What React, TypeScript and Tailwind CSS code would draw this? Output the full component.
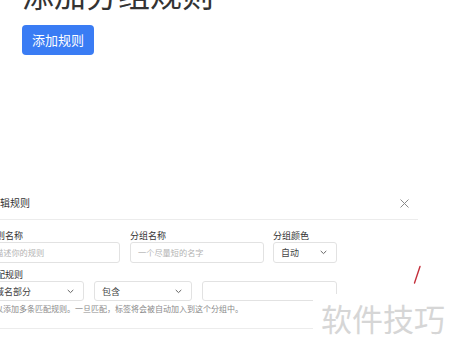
const font = { fontFamily: '"Noto Sans CJK SC", "Noto Sans", sans-serif' };

function Chevron() {
  return (
    <svg width="7" height="5" viewBox="0 0 7 5" fill="none" className="shrink-0">
      <path d="M1 1.2L3.5 3.6L6 1.2" stroke="#666" strokeWidth="1" strokeLinecap="round" strokeLinejoin="round" />
    </svg>
  );
}

function Field({ placeholder, className }: { placeholder?: string; className: string }) {
  return (
    <div className={`flex items-center rounded-[3px] border border-[#e2e2e2] bg-white px-[7px] ${className}`}>
      <span className="text-[8.2px] leading-none whitespace-nowrap text-[#b3b3b3]">{placeholder}</span>
    </div>
  );
}

function Select({ value, className }: { value: string; className: string }) {
  return (
    <div className={`flex items-center justify-between rounded-[3px] border border-[#e2e2e2] bg-white pl-[7px] pr-[9px] ${className}`}>
      <span className="text-[9px] leading-none whitespace-nowrap text-[#444]">{value}</span>
      <Chevron />
    </div>
  );
}

export default function App() {
  return (
    <div className="relative h-[350px] w-[450px] overflow-hidden bg-white text-[#333]" style={font}>
      {/* page header */}
      <div className="pl-[22px]">
        <h1 className="-mt-[23px] text-[32px] leading-[32px] font-normal whitespace-nowrap text-[#333]">添加分组规则</h1>
        <button className="mt-[16px] flex h-[30px] w-[72px] items-center justify-center rounded-[4px] bg-[#3a7cf4] text-[13px] text-white">
          添加规则
        </button>
      </div>

      {/* dialog */}
      <div className="-ml-[28px] mt-[138px] w-[446px]">
        <div className="flex h-[20px] items-center justify-between pl-[18px] pr-[9px]">
          <span className="text-[10px] leading-none text-[#333]">编辑规则</span>
          <svg width="9" height="9" viewBox="0 0 9 9" fill="none">
            <path d="M0.5 0.5L8.5 8.5M8.5 0.5L0.5 8.5" stroke="#8a8a8a" strokeWidth="1" />
          </svg>
        </div>
        <div className="mt-[6px] border-t border-[#ececec]" />

        <div className="px-[15px] pt-[10px]">
          <div className="flex gap-[10px]">
            <div className="w-[133px]">
              <div className="text-[9px] leading-[11px] text-[#333]">规则名称</div>
              <Field placeholder="描述你的规则" className="mt-[1px] h-[21px] w-full" />
            </div>
            <div className="w-[134px]">
              <div className="text-[9px] leading-[11px] text-[#333]">分组名称</div>
              <Field placeholder="一个尽量短的名字" className="mt-[1px] h-[21px] w-full" />
            </div>
            <div className="ml-[-1px] w-[64px]">
              <div className="text-[9px] leading-[11px] text-[#333]">分组颜色</div>
              <Select value="自动" className="mt-[1px] h-[21px] w-full" />
            </div>
          </div>

          <div className="mt-[6px] text-[9px] leading-[11px] text-[#333]">匹配规则</div>
          <div className="mt-[1px] flex gap-[10px]">
            <Select value="域名部分" className="h-[20px] w-[97px]" />
            <Select value="包含" className="h-[20px] w-[98px]" />
            <Field className="h-[20px] w-[135px]" />
          </div>
          <div className="mt-[3px] text-[8px] leading-[10px] whitespace-nowrap text-[#8a8a8a]">
            可以添加多条匹配规则。一旦匹配，标签将会被自动加入到这个分组中。
          </div>
        </div>
        <div className="mt-[14px] border-t border-[#ececec]" />
      </div>

      {/* red mark */}
      <svg className="absolute left-[410px] top-[264px]" width="14" height="22" viewBox="0 0 14 22" fill="none">
        <path d="M10 2.5L4.5 19" stroke="#c4303c" strokeWidth="1.4" strokeLinecap="round" />
      </svg>

      {/* watermark */}
      <div className="absolute left-[313px] top-[294px] h-[46px] w-[137px] bg-white pl-[8px] pt-[7px]">
        <span className="text-[31px] leading-[34px] whitespace-nowrap text-[#d6d6d6]">软件技巧</span>
      </div>
    </div>
  );
}
